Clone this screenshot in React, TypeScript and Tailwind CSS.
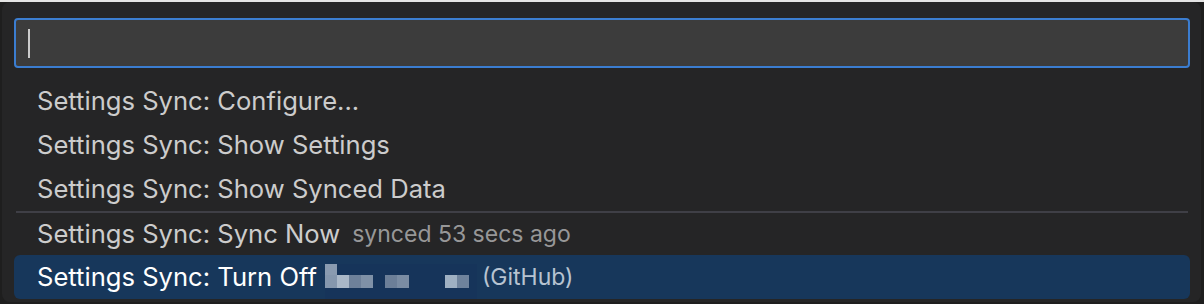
import React from "react";

const font = { fontFamily: "Inter, 'Liberation Sans', sans-serif" };

function Row({ label, desc, sep }: { label: string; desc?: string; sep?: boolean }) {
  return (
    <div className={sep ? "border-t-2 border-[#3f3f46] mx-[2px]" : ""}>
      <div className={`flex items-center ${sep ? "h-[42px] pl-[21px]" : "h-[44px] pl-[23px]"} text-[25.6px] text-[#cccccc]`}>
        <span>{label}</span>
        {desc && <span className="ml-[12px] text-[23px] text-[#cccccc]/70">{desc}</span>}
      </div>
    </div>
  );
}

// pixelated (redacted) account name
function Mosaic() {
  const top = ["#8a9bb0", "", "", "", "", "", "", "", "", "", "", ""];
  const bottom = ["#8597ad", "#aab8c8", "#6e819a", "#7f91a7", "", "#6c7f98", "#7a8ca3", "", "", "", "#9fb0c2", "#6f839c"];
  return (
    <div className="flex flex-col self-start mt-[9px] bg-[#16345a] h-[35px] w-[152px]">
      <div className="flex">
        {top.map((c, i) => (
          <div key={i} className="w-[12px] h-[11px]" style={{ backgroundColor: c || "transparent" }} />
        ))}
      </div>
      <div className="flex">
        {bottom.map((c, i) => (
          <div key={i} className="w-[12px] h-[13px]" style={{ backgroundColor: c || "transparent" }} />
        ))}
      </div>
    </div>
  );
}

export default function App() {
  return (
    <div className="w-[1204px] h-[304px] bg-[#1e1e1e] flex flex-col overflow-hidden" style={font}>
      <div className="h-[2px] bg-[#e4e4e4]" />
      <div className="flex-1 ml-[2px] mr-[3px] mb-[2px] rounded-[8px] bg-[#252526] pt-[16px] pl-[12px] pr-[11px]">
        <div className="h-[50px] border-2 border-[#3b7dd0] rounded-[4px] bg-[#3c3c3c] flex items-center pl-[12px]">
          <div className="w-[2px] h-[29px] bg-[#cccccc]" />
        </div>
        <div className="mt-[11px]">
          <Row label="Settings Sync: Configure..." />
          <Row label="Settings Sync: Show Settings" />
          <Row label="Settings Sync: Show Synced Data" />
          <Row label="Settings Sync: Sync Now" desc="synced 53 secs ago" sep />
          <div className="flex items-center h-[44px] pl-[23px] rounded-[6px] bg-[#17375b] text-[25.6px] text-white">
            <span>Settings Sync: Turn Off</span>
            <span className="ml-[8px] flex h-full">
              <Mosaic />
            </span>
            <span className="ml-[5px] text-[23px] text-[#b7c3d1]">(GitHub)</span>
          </div>
        </div>
      </div>
    </div>
  );
}
